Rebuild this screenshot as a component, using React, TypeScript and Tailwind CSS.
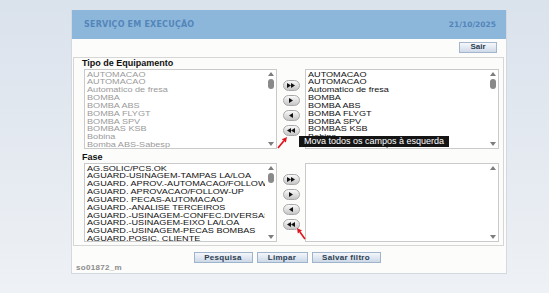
const equipamentos = [
  "AUTOMACAO",
  "AUTOMACAO",
  "Automatico de fresa",
  "BOMBA",
  "BOMBA ABS",
  "BOMBA FLYGT",
  "BOMBA SPV",
  "BOMBAS KSB",
  "Bobina",
  "Bomba ABS-Sabesp",
];

const fases = [
  "AG.SOLIC/PCS.OK",
  "AGUARD-USINAGEM-TAMPAS LA/LOA",
  "AGUARD. APROV.-AUTOMACAO/FOLLOW-UP",
  "AGUARD. APROVACAO/FOLLOW-UP",
  "AGUARD. PECAS-AUTOMACAO",
  "AGUARD.-ANALISE TERCEIROS",
  "AGUARD.-USINAGEM-CONFEC.DIVERSAS",
  "AGUARD.-USINAGEM-EIXO LA/LOA",
  "AGUARD.-USINAGEM-PECAS BOMBAS",
  "AGUARD.POSIC. CLIENTE",
];

type ListProps = { items: string[]; muted?: boolean; thumb?: boolean; width: string; height: string };

const ListBox = ({ items, muted, thumb, width, height }: ListProps) => (
  <div className={`${width} ${height} flex bg-white border border-[#cacaca] overflow-hidden`}>
    <div className={`flex-1 overflow-hidden pl-[2px] text-[7px] ${muted ? "text-[#9a9a9a]" : "text-[#111]"}`}>
      <div className="mt-[0.5px] origin-left scale-x-[1.3]">
        {items.map((item, i) => (
          <div key={i} className="h-[7.85px] leading-[7.85px] whitespace-nowrap">
            {item}
          </div>
        ))}
      </div>
    </div>
    <div className="w-[11px] flex flex-col items-center pt-[2px] pb-[2px] bg-white">
      <div className="w-0 h-0 border-x-[3px] border-x-transparent border-b-[4px] border-b-[#7d7d7d]" />
      {thumb && <div className="mt-[3px] w-[6px] h-[10px] rounded-[3px] bg-[#8a8a8a]" />}
      <div className="flex-1" />
      <div className="w-0 h-0 border-x-[3px] border-x-transparent border-t-[4px] border-t-[#7d7d7d]" />
    </div>
  </div>
);

const MoveButton = ({ dir, double }: { dir: "right" | "left"; double?: boolean }) => (
  <div className="w-[17px] h-[11px] rounded-full border border-[#a9a9a9] bg-linear-to-b from-[#fafafa] to-[#c6c6c6] flex items-center justify-center">
    <svg width={double ? 8 : 4} height="5" viewBox={double ? "0 0 8 5" : "0 0 4 5"}>
      {dir === "right" ? (
        <>
          <polygon points="0,0 4,2.5 0,5" fill="#111" />
          {double && <polygon points="4,0 8,2.5 4,5" fill="#111" />}
        </>
      ) : (
        <>
          <polygon points="4,0 0,2.5 4,5" fill="#111" />
          {double && <polygon points="8,0 4,2.5 8,5" fill="#111" />}
        </>
      )}
    </svg>
  </div>
);

const MoveColumn = () => (
  <div className="w-[28px] flex flex-col items-center pt-[11px] gap-[4px]">
    <MoveButton dir="right" double />
    <MoveButton dir="right" />
    <MoveButton dir="left" />
    <MoveButton dir="left" double />
  </div>
);

const RedArrow = ({ className, x1, y1, x2, y2 }: { className: string; x1: number; y1: number; x2: number; y2: number }) => {
  const a = Math.atan2(y2 - y1, x2 - x1);
  const l = 5;
  const w = 2.6;
  const bx = x2 - l * Math.cos(a);
  const by = y2 - l * Math.sin(a);
  const p1 = `${bx + w * Math.sin(a)},${by - w * Math.cos(a)}`;
  const p2 = `${bx - w * Math.sin(a)},${by + w * Math.cos(a)}`;
  return (
    <svg className={className} width="20" height="20" viewBox="0 0 20 20">
      <line x1={x1} y1={y1} x2={bx} y2={by} stroke="#e0141c" strokeWidth="1.6" />
      <polygon points={`${x2},${y2} ${p1} ${p2}`} fill="#e0141c" />
    </svg>
  );
};

const ActionButton = ({ label, width }: { label: string; width: string }) => (
  <div className={`${width} h-[11px] border border-[#9fb3cb] bg-linear-to-b from-[#f4f7fb] to-[#ccd8e7] flex items-center justify-center text-[8px] leading-[9px] font-bold text-[#2d3d52] tracking-[0.3px]`}>
    {label}
  </div>
);

export default function App() {
  return (
    <div
      className="w-[549px] h-[293px] bg-linear-to-b from-[#dae2ec] to-[#eef1f5] pt-[10px] pl-[71px] overflow-hidden"
      style={{ fontFamily: '"Liberation Sans", Arial, sans-serif' }}
    >
      <div className="w-[436px] h-[264px] bg-[#fcfcfb] border-x border-b border-[#d3d9e1] flex flex-col">
        <div
          className="h-[29px] bg-[#8cb7db] flex items-center justify-between pl-[12px] pr-[10px] font-bold text-[#5385b9]"
          style={{ fontFamily: '"DejaVu Sans", Verdana, sans-serif' }}
        >
          <span className="text-[8px] tracking-[0.2px]">SERVIÇO EM EXECUÇÃO</span>
          <span className="text-[7.5px]">21/10/2025</span>
        </div>

        <div className="h-[18px] flex justify-end pt-[3px] pr-[9px]">
          <div className="w-[38px] h-[10.5px] border border-[#a3b6cd] bg-linear-to-b from-[#f6f8fb] to-[#cfdaea] flex items-center justify-center text-[8px] font-bold text-[#2d3d52]">
            Sair
          </div>
        </div>

        <div className="ml-[1px] mr-[2px] h-[189px] border border-[#d6d6d6] flex flex-col">
          <div className="h-[11px] leading-[11px] pl-[8px] text-[9px] font-bold text-[#111]">Tipo de Equipamento</div>
          <div className="relative flex pl-[10px]">
            <ListBox items={equipamentos} muted thumb width="w-[193px]" height="h-[80px]" />
            <MoveColumn />
            <ListBox items={equipamentos} thumb width="w-[194px]" height="h-[80px]" />
            <div className="absolute left-[225px] top-[67px] h-[11px] pl-[5px] pr-[5px] bg-[#141414] text-white text-[9px] leading-[11px] whitespace-nowrap">
              Mova todos os campos à esquerda
            </div>
            <RedArrow className="absolute left-[198px] top-[62px] overflow-visible" x1={6} y1={17} x2={15} y2={6} />
          </div>

          <div className="mt-[3px] h-[11px] leading-[11px] pl-[8px] text-[9px] font-bold text-[#111]">Fase</div>
          <div className="relative flex pl-[10px]">
            <ListBox items={fases} thumb width="w-[193px]" height="h-[79px]" />
            <MoveColumn />
            <ListBox items={[]} width="w-[194px]" height="h-[79px]" />
            <RedArrow className="absolute left-[216px] top-[62px] overflow-visible" x1={15} y1={14} x2={7} y2={3} />
          </div>
        </div>

        <div className="mt-[6px] flex justify-center gap-[4px] pr-[4px]">
          <ActionButton label="Pesquisa" width="w-[59px]" />
          <ActionButton label="Limpar" width="w-[51px]" />
          <ActionButton label="Salvar filtro" width="w-[69px]" />
        </div>

        <div className="h-[10px] leading-[10px] pl-[4px] text-[8px] font-bold text-[#8c8c8c] tracking-[0.3px]">
          so01872_m
        </div>
      </div>
    </div>
  );
}
